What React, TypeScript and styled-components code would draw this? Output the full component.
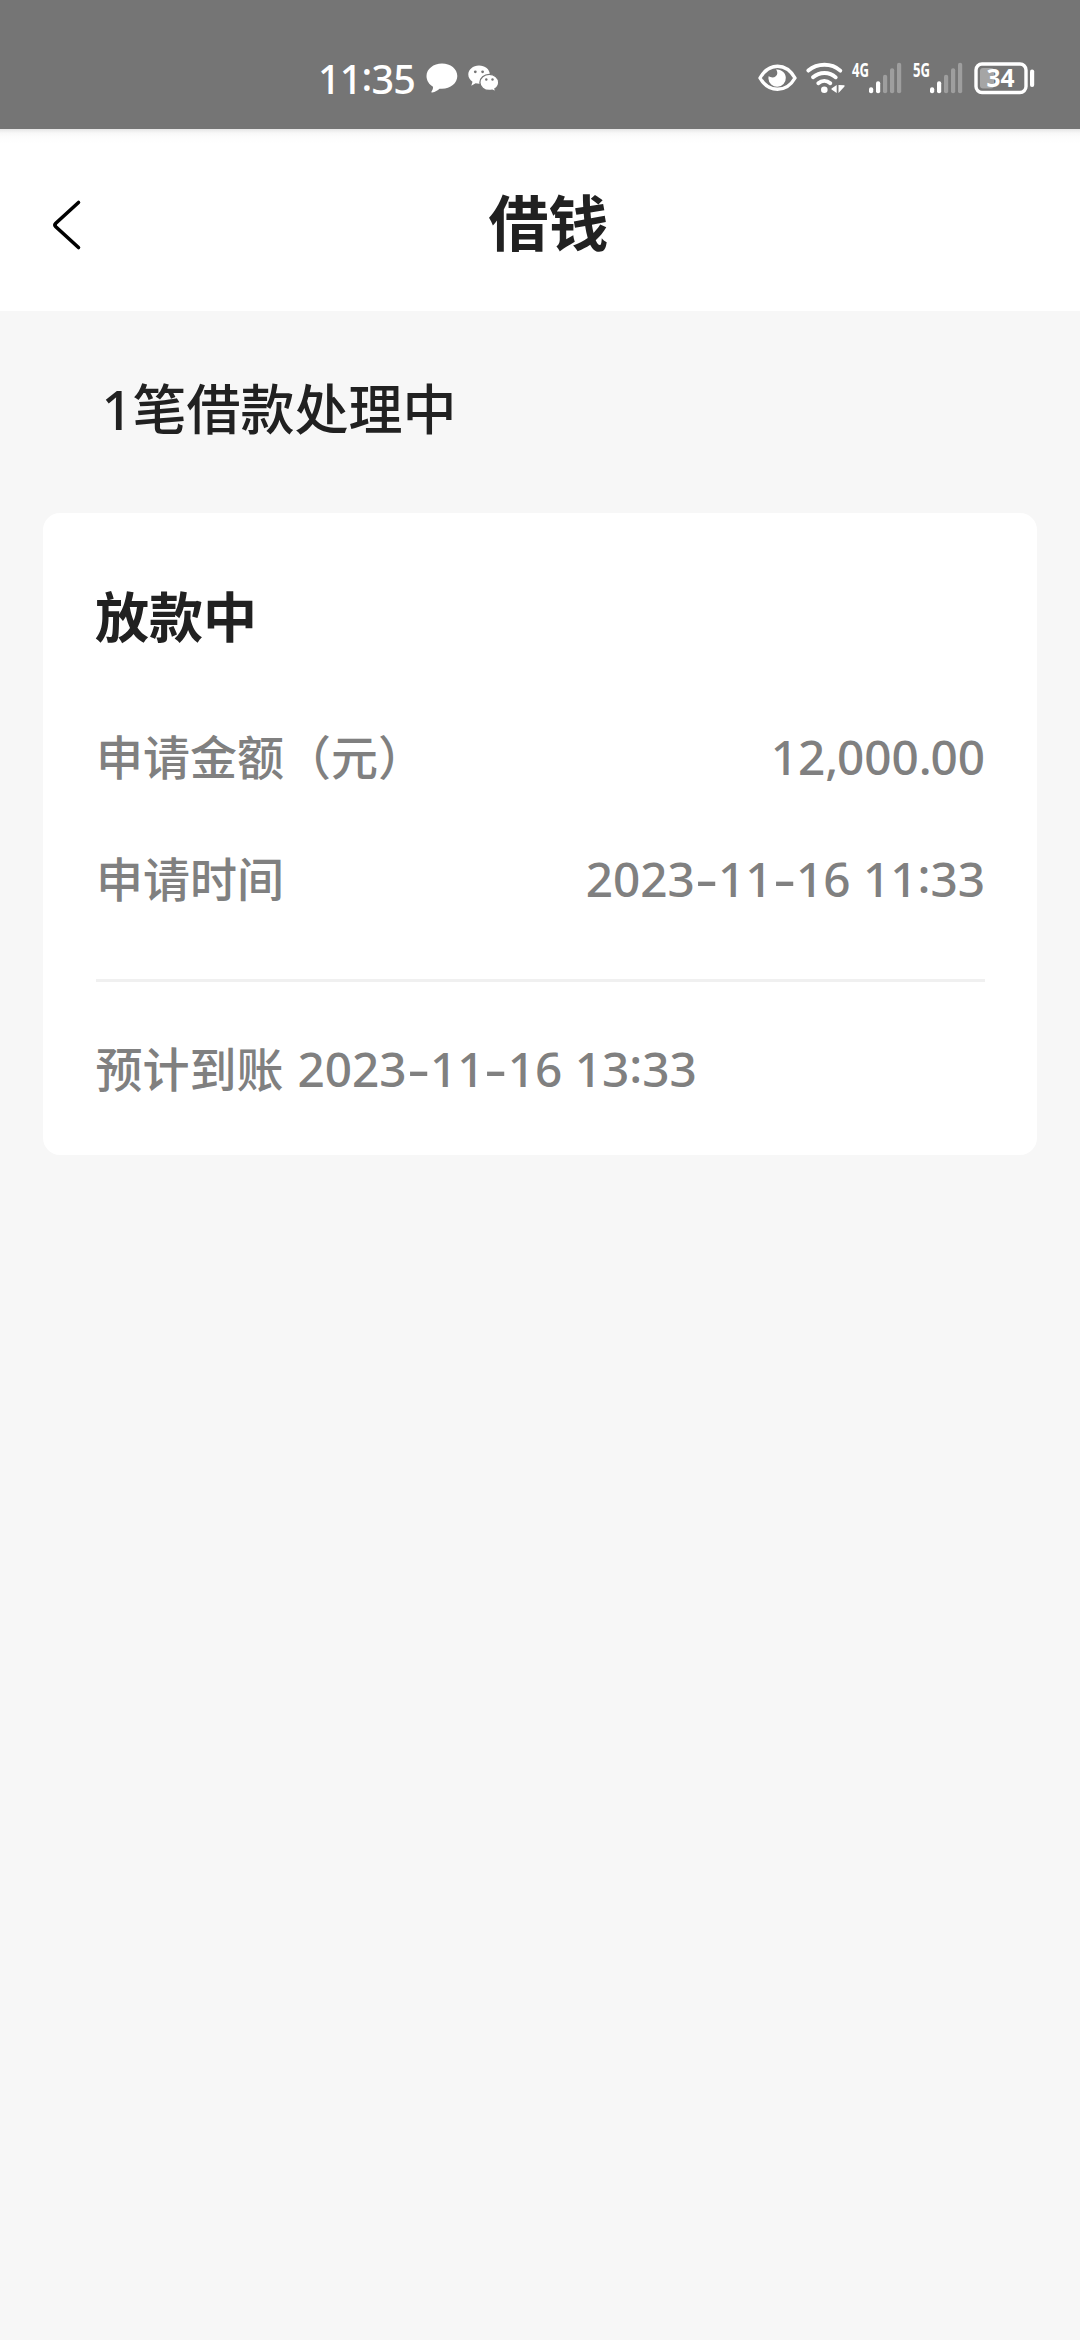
import React from 'react';
import styled, { createGlobalStyle } from 'styled-components';

const GlobalStyle = createGlobalStyle`
  *, *::before, *::after { box-sizing: border-box; }
  html, body { margin: 0; padding: 0; background: #f7f7f7; }
  body {
    font-family: "Noto Sans", "Noto Sans CJK SC", sans-serif;
    font-weight: 500;
    color: #212121;
  }
`;

const Screen = styled.div`
  width: 1080px;
  height: 2340px;
  display: flex;
  flex-direction: column;
  background: #f7f7f7;
  overflow: hidden;
`;

const StatusBar = styled.header`
  height: 129px;
  flex: none;
  display: flex;
  align-items: flex-start;
  justify-content: space-between;
  padding: 58px 45px 0 318px;
  background: #757575;
  color: #fff;
`;

const StatusGroup = styled.div`
  height: 40px;
  display: flex;
  align-items: center;
`;

const Clock = styled.span`
  width: 98px;
  margin-right: 10px;
  padding-top: 1px;
  font-size: 39.5px;
  letter-spacing: -0.8px;
  line-height: 40px;
  white-space: nowrap;
`;

const Glyph = styled.svg<{ $gap?: number }>`
  display: block;
  flex: none;
  margin-left: ${({ $gap = 0 }) => $gap}px;
  overflow: visible;
`;

const NavBar = styled.nav`
  height: 182px;
  flex: none;
  display: flex;
  align-items: center;
  padding: 7px 0 0 52px;
  background: linear-gradient(#e6e6e6 0, #f8f8f8 4px, #fdfdfd 8px, #fff 15px);
`;

const BackButton = styled.button`
  width: 32px;
  height: 54px;
  margin-top: 2px;
  padding: 0;
  border: 0;
  background: none;
`;

const NavTitle = styled.h1`
  flex: 1;
  margin: 0 67px 2px 0;
  text-align: center;
  font-size: 60px;
  line-height: 88px;
  font-weight: 700;
`;

const Summary = styled.h2`
  margin: 0;
  padding: 58px 0 0 101.5px;
  height: 202px;
  font-size: 54px;
  line-height: 80px;
  font-weight: 500;
`;

const Card = styled.section`
  margin: 0 43px;
  height: 642px;
  padding: 64px 52px 0 53px;
  background: #fff;
  border-radius: 17px;
`;

const CardTitle = styled.h3`
  margin: 0 0 39px -1px;
  font-size: 54px;
  line-height: 80px;
  font-weight: 700;
`;

const Row = styled.div`
  height: 122px;
  display: flex;
  align-items: center;
  justify-content: space-between;
  font-size: 47px;
  line-height: 70px;
  color: #808080;
`;

const Divider = styled.hr`
  height: 3px;
  margin: 39px 0 26px;
  border: 0;
  background: #f0f0f0;
`;

const Footer = styled(Row)`
  justify-content: flex-start;
  gap: 14px;
  margin-left: -0.5px;
`;

const Digits = styled.span`
  font-size: 47.7px;
  white-space: pre;
`;

const Dash = styled.span`
  display: inline-block;
  width: 23.3px;
  text-align: center;
  transform: scaleX(1.45);
`;

const Colon = styled.span<{ $lift: number }>`
  position: relative;
  top: -${({ $lift }) => $lift}px;
`;

const Separator = styled.span`
  letter-spacing: -1.3px;
`;

function Numeric({ value, lift = 4 }: { value: string; lift?: number }) {
  return (
    <>
      {value.split(/([-:,.])/).map((part, i) => {
        if (part === '-') return <Dash key={i}>-</Dash>;
        if (part === ':') return <Colon key={i} $lift={lift}>:</Colon>;
        if (part === ',' || part === '.') return <Separator key={i}>{part}</Separator>;
        return part;
      })}
    </>
  );
}

function ChatBubble() {
  return (
    <Glyph width="32" height="30" viewBox="0 0 32 30" fill="#fff">
      <path d="M16 .5C7.500.5.500 6 .5 13c0 4.700 2.800 8.600 6.500 10.700.200 2-.700 3.700-1.500 4.700-.4.600 0 1.100.7 1 3-.400 5.500-2.200 7.300-3.700.8.100 1.700.1 2.500.1 8.500 0 15.300-5.700 15.300-12.800S24.500.5 16 .5z" />
    </Glyph>
  );
}

function WeChat() {
  return (
    <Glyph $gap={10} width="31" height="27" viewBox="0 0 31 27">
      <path fill="#fff" d="M11 .5C5 .5.300 4.500.300 9.500c0 3 1.700 5.500 4.200 7.200l-1.200 4 4.300-2.500c1.200.300 2.300.500 3.600.5 6 0 10.600-4 10.600-9.200S17 .5 11 .5z" />
      <path fill="#fff" stroke="#757575" strokeWidth="1.300" d="M21.300 9.300c-5.200 0-9.400 3.600-9.400 8.100s4.200 8.100 9.400 8.100c1 0 2-.2 3-.4l3.500 1.800-.9-3.100c2.300-1.500 3.800-3.800 3.800-6.400 0-4.500-4.200-8.100-9.400-8.100z" />
      <g fill="#757575"><circle cx="7.300" cy="6.800" r="1.400" /><circle cx="14.600" cy="6.800" r="1.400" /><circle cx="18.300" cy="14.500" r="1.200" /><circle cx="24.500" cy="14.500" r="1.200" /></g>
    </Glyph>
  );
}

function Eye() {
  return (
    <Glyph width="39" height="28" viewBox="0 0 39 28">
      <path fill="none" stroke="#fff" strokeWidth="3.400" strokeLinejoin="round" d="M2 14C6 7 12.500 2.200 19.500 2.200S33 7 37 14c-4 7-10.500 11.300-17.500 11.300S6 21 2 14z" />
      <path fill="#fff" d="M18 5.500c4.900-.8 9.800 3 9.800 8.200a8.700 8.700 0 0 1-17.400.8c0-1 .1-1.700.4-2.500 2.500 2.700 8.400 1.600 8.500-2.700 0-1.700-.500-2.900-1.300-3.800z" />
    </Glyph>
  );
}

function Wifi() {
  return (
    <Glyph $gap={9} width="39" height="32" viewBox="0 0 39 32">
      <g fill="none" stroke="#fff" strokeWidth="3.900" strokeLinecap="round">
        <path d="M2.300 8.600C11.500.700 25.500.700 34.300 8.600" />
        <path d="M7 15.300c6.500-5.800 16.500-5.800 22.700 0" />
        <path d="M12.300 21.300c3.500-3 8.500-3 12 0" />
      </g>
      <circle cx="18.300" cy="27.700" r="3.300" fill="#fff" />
      <path fill="#fff" d="M30.700 23v8l-5.200-3.500v-1.100zM32.500 23v8l6-6.500V23.200z" />
    </Glyph>
  );
}

const BARS = [
  { x: 17, h: 6 },
  { x: 24, h: 12 },
  { x: 31, h: 18.5 },
  { x: 38, h: 25 },
  { x: 45, h: 30.5 },
];

function Signal({ label, gap }: { label: string; gap: number }) {
  return (
    <Glyph $gap={gap} width="50" height="32" viewBox="0 0 50 32" fill="#fff">
      <text x="0" y="15" fontSize="19.500" fontWeight="700" textLength="17" lengthAdjust="spacingAndGlyphs">{label}</text>
      {BARS.map(({ x, h }, i) => (
        <rect key={x} x={x} y={31.3 - h} width="4.200" height={h} rx="2" opacity={i < 2 ? 1 : 0.3} />
      ))}
    </Glyph>
  );
}

function Battery() {
  return (
    <Glyph $gap={11} width="61" height="32" viewBox="0 0 61 32" fill="#fff">
      <rect x="2" y="2" width="50" height="28.500" rx="6" fill="none" stroke="#fff" strokeWidth="3.400" />
      <rect x="6" y="6" width="14" height="20.500" rx="3" opacity=".35" />
      <rect x="56" y="7.500" width="4.200" height="17.500" rx="2" />
      <text x="12.500" y="25.300" fontSize="25" fontWeight="700" textLength="28" lengthAdjust="spacingAndGlyphs">34</text>
    </Glyph>
  );
}

export default function App() {
  return (
    <Screen>
      <GlobalStyle />
      <StatusBar>
        <StatusGroup>
          <Clock><Numeric value="11:35" lift={3} /></Clock>
          <ChatBubble />
          <WeChat />
        </StatusGroup>
        <StatusGroup>
          <Eye />
          <Wifi />
          <Signal label="4G" gap={7} />
          <Signal label="5G" gap={11} />
          <Battery />
        </StatusGroup>
      </StatusBar>
      <NavBar>
        <BackButton aria-label="返回">
          <Glyph width="32" height="54" viewBox="0 0 32 54">
            <path d="M26.500 4.500L3.800 25.200q-1.800 1.800 0 3.600L26.500 49.500" fill="none" stroke="#000" strokeWidth="3.600" strokeLinecap="round" />
          </Glyph>
        </BackButton>
        <NavTitle>借钱</NavTitle>
      </NavBar>
      <Summary>1笔借款处理中</Summary>
      <Card>
        <CardTitle>放款中</CardTitle>
        <Row>
          <span>申请金额（元）</span>
          <Digits><Numeric value="12,000.00" /></Digits>
        </Row>
        <Row>
          <span>申请时间</span>
          <Digits><Numeric value="2023-11-16 11:33" /></Digits>
        </Row>
        <Divider />
        <Footer as="footer">
          <span>预计到账</span>
          <Digits><Numeric value="2023-11-16 13:33" /></Digits>
        </Footer>
      </Card>
    </Screen>
  );
}
